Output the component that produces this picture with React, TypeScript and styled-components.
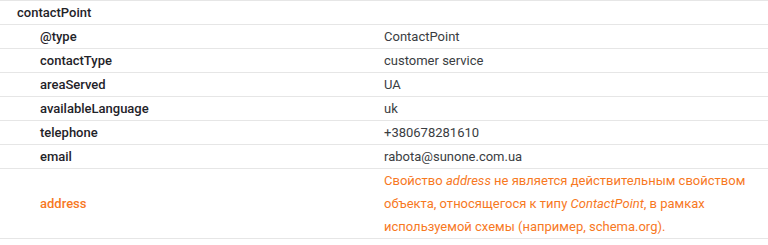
import React from 'react';
import styled, { createGlobalStyle } from 'styled-components';

const GlobalStyle = createGlobalStyle`
  body {
    margin: 0;
    background: #ffffff;
    font-family: Roboto, 'Noto Sans', sans-serif;
  }
`;

const Table = styled.div`
  width: 768px;
  border-top: 1px solid #e6e6e6;
`;

const Row = styled.div`
  display: grid;
  grid-template-columns: 384px 1fr;
  border-bottom: 1px solid #e6e6e6;
  min-height: 23px;
`;

const Key = styled.div<{ $level: number; $warn?: boolean }>`
  display: flex;
  align-items: center;
  padding-left: ${(p) => (p.$level === 0 ? 17 : 40)}px;
  font-size: 13px;
  font-weight: 500;
  color: ${(p) => (p.$warn ? '#f7791f' : '#1f2329')};
`;

const Value = styled.div<{ $warn?: boolean }>`
  display: flex;
  align-items: center;
  padding-right: 16px;
  font-size: 13px;
  line-height: 23px;
  color: ${(p) => (p.$warn ? '#f7791f' : '#3a3d42')};

  em {
    font-style: italic;
  }
`;

const rows: { k: string; v: string }[] = [
  { k: '@type', v: 'ContactPoint' },
  { k: 'contactType', v: 'customer service' },
  { k: 'areaServed', v: 'UA' },
  { k: 'availableLanguage', v: 'uk' },
  { k: 'telephone', v: '+380678281610' },
  { k: 'email', v: 'rabota@sunone.com.ua' },
];

const App: React.FC = () => {
  return (
    <>
      <GlobalStyle />
      <Table>
        <Row>
          <Key $level={0}>contactPoint</Key>
          <Value />
        </Row>
        {rows.map((r) => (
          <Row key={r.k}>
            <Key $level={1}>{r.k}</Key>
            <Value>{r.v}</Value>
          </Row>
        ))}
        <Row>
          <Key $level={1} $warn>address</Key>
          <Value $warn>
            <span>
              Свойство <em>address</em> не является действительным свойством объекта,
              относящегося к типу <em>ContactPoint</em>, в рамках используемой схемы
              (например, schema.org).
            </span>
          </Value>
        </Row>
        <Row>
          <Key $level={1}></Key>
          <Value>PostalAddress</Value>
        </Row>
      </Table>
    </>
  );
};

export default App;
